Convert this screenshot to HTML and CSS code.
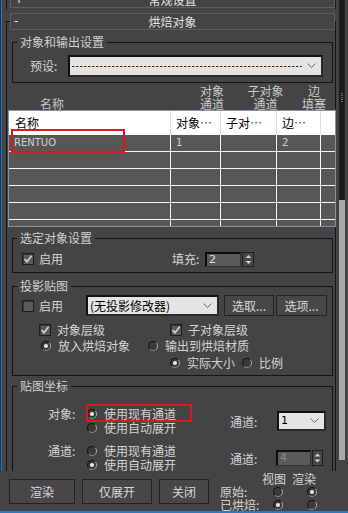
FILE: index.html
```html
<!DOCTYPE html>
<html lang="zh">
<head>
<meta charset="utf-8">
<title>渲染到纹理</title>
<link rel="stylesheet" href="styles.css">
</head>
<body>
<div class="screen">
  <div class="top">
    <div class="edge"></div>
    <div class="scroll">
      <div class="rollout closed">
        <div class="rhead"><span class="sign">+</span><span class="rtitle">常规设置</span><span></span></div>
      </div>
      <div class="rollout open">
        <div class="rhead"><span class="sign">-</span><span class="rtitle">烘焙对象</span><span></span></div>

        <div class="group g1">
          <span class="gtitle">对象和输出设置</span>
          <div class="row preset">
            <span class="lbl w38">预设:</span>
            <div class="combo wide"><span class="dashes"></span><svg class="chev" width="9" height="6" viewBox="0 0 9 6"><path d="M0.5 0.5 L4.5 4.5 L8.5 0.5" fill="none" stroke="#6a6a6a" stroke-width="1"/></svg></div>
          </div>
        </div>

        <div class="colhead">
          <div class="ch c-name"><span class="chl"></span><span class="chl">名称</span></div>
          <div class="ch c-obj"><span class="chl">对象</span><span class="chl">通道</span></div>
          <div class="ch c-sub"><span class="chl">子对象</span><span class="chl">通道</span></div>
          <div class="ch c-pad"><span class="chl">边</span><span class="chl">填塞</span></div>
        </div>

        <div class="table">
          <div class="tr th">
            <div class="td c1">名称</div><div class="td c2">对象<span class="ell">…</span></div><div class="td c3">子对<span class="ell">…</span></div><div class="td c4">边<span class="ell">…</span></div><div class="td c5"></div>
          </div>
          <div class="tr">
            <div class="td c1 lat">RENTUO</div><div class="td c2 lat">1</div><div class="td c3"></div><div class="td c4 lat">2</div><div class="td c5"></div>
          </div>
          <div class="tr"><div class="td c1"></div><div class="td c2"></div><div class="td c3"></div><div class="td c4"></div><div class="td c5"></div></div>
          <div class="tr"><div class="td c1"></div><div class="td c2"></div><div class="td c3"></div><div class="td c4"></div><div class="td c5"></div></div>
          <div class="tr"><div class="td c1"></div><div class="td c2"></div><div class="td c3"></div><div class="td c4"></div><div class="td c5"></div></div>
          <div class="tr"><div class="td c1"></div><div class="td c2"></div><div class="td c3"></div><div class="td c4"></div><div class="td c5"></div></div>
          <div class="tr"><div class="td c1"></div><div class="td c2"></div><div class="td c3"></div><div class="td c4"></div><div class="td c5"></div></div>
          <div class="mark mark1"></div>
        </div>

        <div class="group g2">
          <span class="gtitle">选定对象设置</span>
          <div class="row r-sel">
            <span class="cb on"><svg width="10" height="10" viewBox="0 0 10 10"><path d="M1.5 5 L4 7.8 L8.6 1.8" fill="none" stroke="#d4d4d4" stroke-width="1.6"/></svg></span>
            <span class="lbl w133">启用</span>
            <span class="lbl w33">填充:</span>
            <span class="spin-field">2</span>
            <span class="spin-arrows"><svg width="9" height="13" viewBox="0 0 9 13"><path d="M1.5 5 L4.5 2 L7.5 5 Z" fill="#cfcfcf"/><path d="M1.5 8 L4.5 11 L7.5 8 Z" fill="#cfcfcf"/></svg></span>
          </div>
        </div>

        <div class="group g3">
          <span class="gtitle">投影贴图</span>
          <div class="row r-proj">
            <span class="cb"></span>
            <span class="lbl w47">启用</span>
            <div class="combo proj"><span class="ctext">(无投影修改器)</span><svg class="chev" width="9" height="6" viewBox="0 0 9 6"><path d="M0.5 0.5 L4.5 4.5 L8.5 0.5" fill="none" stroke="#6a6a6a" stroke-width="1"/></svg></div>
            <span class="btn b-pick">选取...</span>
            <span class="btn b-opt">选项...</span>
          </div>
          <div class="row r-lvl">
            <span class="cb on"><svg width="10" height="10" viewBox="0 0 10 10"><path d="M1.5 5 L4 7.8 L8.6 1.8" fill="none" stroke="#d4d4d4" stroke-width="1.6"/></svg></span>
            <span class="lbl w113">对象层级</span>
            <span class="cb on"><svg width="10" height="10" viewBox="0 0 10 10"><path d="M1.5 5 L4 7.8 L8.6 1.8" fill="none" stroke="#d4d4d4" stroke-width="1.6"/></svg></span>
            <span class="lbl">子对象层级</span>
          </div>
          <div class="row r-put">
            <span class="rb sel"></span>
            <span class="lbl w90">放入烘焙对象</span>
            <span class="rb"></span>
            <span class="lbl">输出到烘焙材质</span>
          </div>
          <div class="row r-size">
            <span class="rb sel"></span>
            <span class="lbl w55">实际大小</span>
            <span class="rb"></span>
            <span class="lbl">比例</span>
          </div>
        </div>

        <div class="group g4">
          <span class="gtitle">贴图坐标</span>
          <div class="block b1">
            <span class="lbl blab">对象:</span>
            <div class="rlist">
              <div class="ritem"><span class="rb sel"></span><span class="lbl">使用现有通道</span><div class="mark mark2"></div></div>
              <div class="ritem"><span class="rb"></span><span class="lbl">使用自动展开</span></div>
            </div>
            <span class="lbl rlab">通道:</span>
            <div class="combo chan"><span class="ctext">1</span><svg class="chev" width="9" height="6" viewBox="0 0 9 6"><path d="M0.5 0.5 L4.5 4.5 L8.5 0.5" fill="none" stroke="#6a6a6a" stroke-width="1"/></svg></div>
          </div>
          <div class="block b2">
            <span class="lbl blab">通道:</span>
            <div class="rlist">
              <div class="ritem"><span class="rb"></span><span class="lbl">使用现有通道</span></div>
              <div class="ritem"><span class="rb sel"></span><span class="lbl">使用自动展开</span></div>
            </div>
            <span class="lbl rlab2">通道:</span>
            <span class="spin-field dis">4</span>
            <span class="spin-arrows a2"><svg width="9" height="14" viewBox="0 0 9 14"><path d="M1.5 5.5 L4.5 2.5 L7.5 5.5 Z" fill="#cfcfcf"/><path d="M1.5 8.5 L4.5 11.5 L7.5 8.5 Z" fill="#cfcfcf"/></svg></span>
          </div>
        </div>
      </div>
    </div>
    <div class="vscroll">
      <div class="vs-top"><span class="grip"></span></div>
      <div class="vs-mid"></div>
    </div>
  </div>

  <div class="bottom">
    <div class="btns">
      <span class="btn bb b-render">渲染</span>
      <span class="btn bb b-unwrap">仅展开</span>
      <span class="btn bb b-close">关闭</span>
    </div>
    <div class="vgrid">
      <span></span><span class="vh">视图</span><span class="vh">渲染</span>
      <span class="lbl">原始:</span><span class="rb r-v"></span><span class="rb sel r-r"></span>
      <span class="lbl">已烘焙:</span><span class="rb sel r-v"></span><span class="rb r-r"></span>
    </div>
  </div>
  <div class="taskbar"></div>
</div>
</body>
</html>
```

FILE: styles.css
```css
* { box-sizing: border-box; margin: 0; padding: 0; }
html, body { width: 348px; height: 513px; overflow: hidden; background: #444444; }
body {
  font-family: "Noto Sans CJK SC", "Noto Sans", sans-serif;
  font-size: 12px;
  line-height: 14px;
  color: #d4d4d4;
}
.screen { width: 348px; height: 513px; display: flex; flex-direction: column; }
.top { height: 471px; display: flex; overflow: hidden; flex: none; }
.edge { width: 2px; flex: none; background: linear-gradient(90deg, #1d3550 0 1px, #2f74b8 1px 2px); }
.scroll { width: 337px; flex: none; overflow: hidden; }
.vscroll { width: 6px; flex: none; display: flex; flex-direction: column; }
.vs-top { height: 200px; background: #1c1c1c; display: flex; justify-content: center; padding-top: 93px; }
.grip { width: 2px; height: 10px; background: repeating-linear-gradient(180deg, #6a6a6a 0 1px, transparent 1px 2px); }
.vs-mid { height: 260px; background: #a9a9a9; }

/* rollouts */
.rollout { margin-left: 4px; width: 330px; border-left: 1px solid #161616; border-right: 1px solid #161616; }
.rollout.closed { margin-top: -9px; height: 18px; }
.rollout.open { margin-top: 12px; border-top: 1px solid #161616; height: 520px; }
.rhead {
  margin-left: 3px; width: 325px; height: 17px;
  border: 1px solid #5d5d5d; background: #444;
  display: grid; grid-template-columns: 1fr auto 1fr; align-items: center;
  color: #e2e2e2; line-height: 15px;
}
.rollout.open .rhead { margin-top: -9px; }
.sign { padding-left: 3px; font-family: "DejaVu Sans", sans-serif; font-size: 12px; }

/* groups */
.group { margin-left: 5px; width: 321px; border: 1px solid #141414; }
.gtitle {
  display: block; width: max-content; height: 14px; line-height: 14px;
  margin: -8px 0 0 4px; padding: 0 3px; background: #444; color: #d0d0d0;
}
.g1 { margin-top: 12px; height: 41px; }
.g2 { margin-top: 11px; height: 35px; }
.g3 { margin-top: 13px; height: 90px; }
.g4 { margin-top: 10px; height: 120px; }

.row { display: flex; align-items: center; }
.lbl { white-space: nowrap; flex: none; }
.w38 { width: 38px; }
.w133 { width: 133px; }
.w33 { width: 33px; }
.w47 { width: 47px; }
.w113 { width: 113px; }
.w90 { width: 90px; }
.w55 { width: 55px; }

.preset { margin-top: 6px; height: 22px; padding-left: 17px; }
.combo {
  flex: none; position: relative; display: flex; align-items: center;
  background: #e4e4e4; border: 2px solid #101010; border-right-color: #2a2a2a; border-bottom-color: #2a2a2a;
  color: #000;
}
.combo.wide { width: 255px; height: 22px; }
.dashes {
  display: block; margin-left: 2px; width: 230px; height: 1px;
  background: repeating-linear-gradient(90deg, #2a2a2a 0 2px, #d9822b 2px 3px, #e4e4e4 3px 4px);
}
.chev { position: absolute; right: 5px; top: 50%; margin-top: -3px; }

/* column heads */
.colhead { margin: 1px 0 0 1px; height: 26px; display: flex; color: #c8c8c8; }
.ch { flex: none; display: flex; flex-direction: column; align-items: center; }
.chl { display: block; height: 13px; line-height: 13px; white-space: nowrap; }
.c-name { width: 88px; }
.c-obj { width: 36px; margin-left: 98px; }
.c-sub { width: 37px; margin-left: 17px; }
.c-pad { width: 28px; margin-left: 16px; }

/* table */
.table {
  position: relative; margin-left: 1px; width: 328px; height: 117px;
  border: 1px solid #8791a0; background: #575757; overflow: hidden;
}
.tr { display: flex; height: 17px; border-bottom: 1px solid #f4f4f4; }
.tr.th { height: 24px; background: #fff; border-bottom: none; color: #000; }
.td { flex: none; height: 100%; border-right: 1px solid #f4f4f4; padding-left: 5px; display: flex; align-items: center; white-space: nowrap; overflow: hidden; }
.th .td { border-right-color: #dedede; }
.c1 { width: 162px; }
.th .c1 { padding-left: 6px; }
.c2 { width: 50px; }
.c3 { width: 56px; }
.c4 { width: 44px; }
.c5 { width: 14px; border-right: none; }
.ell { color: #1d3f8a; letter-spacing: -1px; }
.lat { font-family: "DejaVu Sans", sans-serif; font-size: 10px; color: #d2d2d2; }

.mark { position: absolute; border: 2px solid #e3141c; pointer-events: none; }
.mark1 { left: 2px; top: 18px; width: 114px; height: 24px; }

/* checkbox / radio */
.cb {
  flex: none; width: 12px; height: 12px; border: 1px solid #1c1c1c;
  background: #5a5a5a; display: flex; align-items: center; justify-content: center;
  box-shadow: inset 1px 1px 0 #3a3a3a;
}
.rb {
  flex: none; display: block; width: 10px; height: 10px; border-radius: 50%;
  background: #3a3a3a; border: 1px solid #121212; border-right-color: #a8a8a8; border-bottom-color: #8e8e8e;
  position: relative;
}
.rb.sel::after {
  content: ""; position: absolute; left: 2px; top: 2px; width: 4px; height: 4px;
  border-radius: 50%; background: #ececec;
}

/* group 2 */
.r-sel { margin-top: 6px; height: 16px; padding-left: 9px; }
.r-sel .cb { margin-right: 5px; }
.spin-field {
  flex: none; width: 36px; height: 15px; background: #5a5a5a;
  border: 2px solid #0e0e0e; border-right: 1px solid #333; border-bottom: 1px solid #333;
  font-family: "DejaVu Sans", sans-serif; font-size: 11px; line-height: 11px; padding-left: 2px; color: #dedede;
}
.spin-arrows {
  flex: none; width: 12px; height: 15px; margin-left: 1px; border: 1px solid #1e1e1e;
  background: #484848; display: flex; align-items: center; justify-content: center;
}

/* group 3 */
.r-proj { margin-top: 2px; height: 21px; padding-left: 9px; }
.r-proj .cb { margin-right: 5px; }
.combo.proj { width: 133px; height: 21px; }
.ctext { padding-left: 2px; white-space: nowrap; }
.btn {
  flex: none; display: flex; align-items: center; justify-content: center;
  border: 1px solid #232323; background: #474747; color: #d8d8d8; white-space: nowrap;
}
.b-pick { margin-left: 5px; width: 50px; height: 21px; }
.b-opt { margin-left: 2px; width: 51px; height: 21px; }
.r-lvl { margin-top: 7px; height: 14px; padding-left: 26px; }
.r-lvl .cb { margin-right: 6px; }
.r-put { margin-top: 2px; height: 14px; padding-left: 28px; }
.r-put .rb, .r-size .rb { margin-right: 7px; }
.r-size { margin-top: 3px; height: 14px; padding-left: 157px; }

/* group 4 */
.block { display: flex; align-items: center; padding-left: 35px; }
.b1 { margin-top: 14px; }
.b2 { margin-top: 9px; }
.blab { width: 39px; align-self: flex-start; }
.rlist { width: 143px; flex: none; }
.ritem { position: relative; height: 14px; display: flex; align-items: center; }
.ritem .rb { margin-right: 7px; }
.mark2 { left: -1px; top: -3px; width: 106px; height: 18px; }
.rlab { width: 47px; margin-top: 1px; }
.combo.chan { width: 49px; height: 20px; }
.combo.chan .ctext { padding-left: 2px; font-family: "DejaVu Sans", sans-serif; font-size: 11px; }
.rlab2 { width: 46px; margin-top: 2px; }
.spin-field.dis { width: 35px; height: 16px; color: #8a8a8a; }
.spin-arrows.a2 { width: 11px; height: 16px; margin-left: 1px; }

/* bottom */
.bottom { height: 40px; flex: none; display: flex; }
.btns { display: flex; padding: 8px 0 0 9px; }
.bb { height: 25px; }
.b-render { width: 66px; }
.b-unwrap { width: 70px; margin-left: 7px; }
.b-close { width: 50px; margin-left: 7px; }
.vgrid {
  margin: 1px 0 0 11px;
  display: grid; grid-template-columns: 42px 30px 36px; grid-auto-rows: 13px; align-items: center;
  line-height: 13px;
}
.vgrid .r-v { margin-left: 11px; }
.vgrid .r-r { margin-left: 15px; }
.taskbar { height: 2px; flex: none; background: #2a7ac6; }
```
